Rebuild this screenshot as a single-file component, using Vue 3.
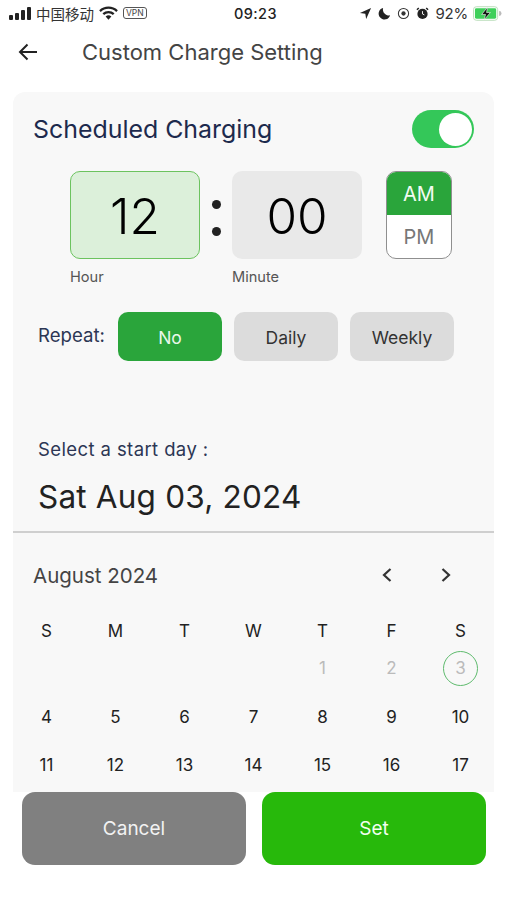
<script setup>
const weekdays = ['S', 'M', 'T', 'W', 'T', 'F', 'S']
const days = [
  { n: '', k: 'a' }, { n: '', k: 'b' }, { n: '', k: 'c' }, { n: '', k: 'd' },
  { n: 1, muted: true }, { n: 2, muted: true }, { n: 3, muted: true, selected: true },
  ...[4, 5, 6, 7, 8, 9, 10, 11, 12, 13, 14, 15, 16, 17].map(n => ({ n })),
]
</script>

<template>
  <div class="page">
    <div class="status">
      <div class="status-left">
        <svg class="signal" viewBox="0 0 22 14" width="22" height="14">
          <rect x="0" y="9" width="4" height="5" rx="1" />
          <rect x="6" y="7" width="4" height="7" rx="1" />
          <rect x="12" y="4" width="4" height="10" rx="1" />
          <rect x="18" y="1" width="4" height="13" rx="1" />
        </svg>
        <span class="carrier">中国移动</span>
        <svg class="wifi" viewBox="0 0 20 14" width="19" height="14">
          <path d="M1 5a13 13 0 0 1 18 0" fill="none" stroke="#222" stroke-width="2.4" />
          <path d="M4.5 8.2a8 8 0 0 1 11 0" fill="none" stroke="#222" stroke-width="2.4" />
          <path d="M10 14l-3-3.2a4.300 4.300 0 0 1 6 0z" fill="#222" />
        </svg>
        <span class="vpn">VPN</span>
      </div>
      <span class="time">09:23</span>
      <div class="status-right">
        <svg viewBox="0 0 14 14" width="13" height="13"><path d="M13 1L1 6.500l5.800.8.9 5.700z" fill="#222" /></svg>
        <svg viewBox="0 0 14 14" width="13" height="13"><path d="M5.500 1a6.300 6.300 0 1 0 7.500 8A6.500 6.500 0 0 1 5.500 1z" fill="#222" /></svg>
        <svg viewBox="0 0 14 14" width="13" height="13">
          <circle cx="7" cy="7" r="5.500" fill="none" stroke="#333" stroke-width="1.100" />
          <circle cx="7" cy="7" r="2.300" fill="#333" />
        </svg>
        <svg viewBox="0 0 14 14" width="13" height="13">
          <circle cx="7" cy="7.500" r="5.500" fill="#222" />
          <path d="M1 3l2-2M13 3l-2-2" stroke="#222" stroke-width="1.600" />
          <path d="M7 4.500v3l2 1" stroke="#fff" stroke-width="1" fill="none" />
        </svg>
        <span class="battery-text">92%</span>
        <svg viewBox="0 0 30 15" width="29" height="15">
          <rect x="0.500" y="0.500" width="25" height="14" rx="3" fill="#fff" stroke="#b9ddb9" />
          <rect x="2" y="2" width="22" height="11" rx="1.500" fill="#3ecf5a" />
          <path d="M15 1L9 8.500h4L11.500 14 18 6.500h-4z" fill="#111" stroke="#fff" stroke-width=".6" />
          <path d="M27 5v5a2.500 2.500 0 0 0 0-5z" fill="#bbb" />
        </svg>
      </div>
    </div>

    <header class="header">
      <svg class="back" viewBox="0 0 20 18" width="20" height="18">
        <path d="M19 9H2M9.500 1.500L2 9l7.500 7.500" fill="none" stroke="#222" stroke-width="2" />
      </svg>
      <h1 class="page-title">Custom Charge Setting</h1>
    </header>

    <main class="card">
      <div class="title-row">
        <h2 class="title">Scheduled Charging</h2>
        <div class="toggle"><span class="knob"></span></div>
      </div>

      <div class="time-row">
        <div class="time-col">
          <div class="time-box active">12</div>
          <span class="time-label">Hour</span>
        </div>
        <div class="colon"><i></i><i></i></div>
        <div class="time-col">
          <div class="time-box">00</div>
          <span class="time-label">Minute</span>
        </div>
        <div class="ampm">
          <span class="am">AM</span>
          <span class="pm">PM</span>
        </div>
      </div>

      <div class="repeat-row">
        <span class="repeat-label">Repeat:</span>
        <button class="pill on">No</button>
        <button class="pill">Daily</button>
        <button class="pill">Weekly</button>
      </div>

      <div class="start-label">Select a start day :</div>
      <div class="start-date">Sat Aug 03, 2024</div>
      <div class="divider"></div>

      <div class="month-row">
        <span class="month">August 2024</span>
        <div class="month-nav">
          <svg viewBox="0 0 12 16" width="12" height="16"><path d="M9.500 2L3 8l6.500 6" fill="none" stroke="#333" stroke-width="2.200" /></svg>
          <svg viewBox="0 0 12 16" width="12" height="16"><path d="M2.500 2L9 8l-6.500 6" fill="none" stroke="#333" stroke-width="2.200" /></svg>
        </div>
      </div>

      <div class="weekdays">
        <span v-for="(d, i) in weekdays" :key="i">{{ d }}</span>
      </div>
      <div class="days">
        <div v-for="d in days" :key="d.k || d.n" class="day">
          <span :class="{ muted: d.muted, selected: d.selected }">{{ d.n }}</span>
        </div>
      </div>
    </main>

    <footer class="actions">
      <button class="action cancel">Cancel</button>
      <button class="action set">Set</button>
    </footer>
  </div>
</template>

<style>
html, body { background: #fff; }
</style>

<style scoped>
.page {
  width: 507px;
  height: 900px;
  overflow: hidden;
  background: #fff;
  font-family: Inter, "Noto Sans CJK SC", sans-serif;
  color: #222;
}
.status {
  height: 28px;
  padding: 0 5px 2px 9px;
  box-sizing: border-box;
  display: grid;
  grid-template-columns: 1fr auto 1fr;
  align-items: center;
}
.status-left, .status-right { display: flex; align-items: center; }
.status-left { gap: 5px; }
.status-right { justify-content: flex-end; gap: 6px; }
.signal { fill: #222; }
.carrier { font-size: 14.500px; color: #333; }
.vpn {
  font-size: 8.500px;
  border: 1px solid #555;
  border-radius: 3px;
  padding: 0 2px;
  line-height: 10px;
  color: #444;
}
.time { font-size: 14.500px; font-weight: 500; letter-spacing: .4px; color: #222; }
.battery-text { font-size: 15px; color: #333; margin-right: -1px; letter-spacing: -.2px; }
.header {
  height: 50px;
  display: flex;
  align-items: center;
  padding-left: 18px;
  padding-bottom: 2px;
  box-sizing: border-box;
}
.page-title {
  margin: 0 0 0 44px;
  font-size: 22px;
  font-weight: 400;
  color: #444;
}
.card {
  margin: 14px 13px 0;
  height: 700px;
  box-sizing: border-box;
  overflow: hidden;
  background: #f8f8f8;
  border-radius: 12px 12px 0 0;
}
.title-row {
  height: 38px;
  margin-top: 18px;
  padding: 0 20px;
  display: flex;
  justify-content: space-between;
  align-items: center;
}
.title {
  margin: 0;
  font-size: 24.900px;
  font-weight: 400;
  color: #1d2a4d;
}
.toggle {
  width: 62px;
  height: 38px;
  box-sizing: border-box;
  padding: 2.500px;
  border-radius: 19px;
  background: #34c759;
  display: flex;
  justify-content: flex-end;
}
.knob { width: 33px; height: 33px; border-radius: 50%; background: #fff; }
.time-row {
  display: flex;
  margin-top: 23px;
  padding-left: 57px;
}
.time-col { display: flex; flex-direction: column; }
.time-box {
  width: 130px;
  height: 88px;
  box-sizing: border-box;
  padding-top: 2px;
  border-radius: 10px;
  background: #e9e9e9;
  display: flex;
  align-items: center;
  justify-content: center;
  font-size: 49.500px;
  font-weight: 300;
  color: #000;
}
.time-box.active {
  background: #dcf0da;
  border: 1.700px solid #6cc35f;
}
.time-label { margin-top: 8px; font-size: 14.600px; line-height: 20px; color: #555; }
.colon {
  width: 32px;
  height: 88px;
  display: flex;
  flex-direction: column;
  align-items: center;
  justify-content: center;
  gap: 18px;
  padding-top: 6px;
  box-sizing: border-box;
}
.colon i { width: 9px; height: 9px; border-radius: 50%; background: #222; }
.ampm {
  margin-left: 24px;
  width: 66px;
  height: 88px;
  box-sizing: border-box;
  border: 1.500px solid #8f8f8f;
  border-radius: 10px;
  overflow: hidden;
  display: flex;
  flex-direction: column;
  background: #fff;
  font-size: 20px;
}
.am, .pm { flex: 1; display: flex; align-items: center; justify-content: center; }
.am { background: #2aa53b; color: #f2fbf2; }
.pm { color: #777; }
.repeat-row {
  display: flex;
  align-items: center;
  margin-top: 25px;
  padding-left: 25px;
}
.repeat-label { width: 80px; font-size: 18.600px; color: #2c3654; padding-bottom: 3px; }
.pill {
  width: 104px;
  height: 49px;
  margin-right: 12px;
  border: 0;
  border-radius: 10px;
  background: #dcdcdc;
  font: 400 17.500px Inter, sans-serif;
  color: #333;
  padding: 2px 0 0;
}
.pill.on { background: #2aa53b; color: #e9f7e9; }
.start-label {
  margin-top: 75px;
  padding-left: 25px;
  font-size: 18.500px;
  line-height: 26px;
  letter-spacing: .4px;
  color: #2c3654;
}
.start-date {
  margin-top: 13px;
  padding-left: 25px;
  font-size: 31.500px;
  line-height: 44px;
  color: #222;
  letter-spacing: .2px;
}
.divider { height: 2px; background: #cfcfcf; margin-top: 12px; }
.month-row {
  height: 30px;
  margin-top: 27px;
  padding-left: 20px;
  display: flex;
  justify-content: space-between;
  align-items: center;
}
.month { font-size: 20.500px; color: #444; }
.month-nav { display: flex; gap: 47px; padding-right: 42px; }
.weekdays {
  margin: 31px 0 0 -1px;
  display: grid;
  grid-template-columns: repeat(7, 69px);
  text-align: center;
  font-size: 17px;
  line-height: 20px;
  color: #222;
}
.days {
  margin: 3px 0 0 -1px;
  display: grid;
  grid-template-columns: repeat(7, 69px);
  grid-auto-rows: 48.500px;
}
.day {
  display: flex;
  align-items: center;
  justify-content: center;
  font-size: 17px;
  color: #222;
}
.day .muted { color: #bbb; }
.day .selected {
  width: 35px;
  height: 35px;
  box-sizing: border-box;
  border: 1.700px solid #5fbb6e;
  border-radius: 50%;
  display: flex;
  align-items: center;
  justify-content: center;
}
.actions {
  display: flex;
  gap: 16px;
  padding: 0 21px 0 22px;
}
.action {
  flex: 1;
  height: 73px;
  border: 0;
  border-radius: 13px;
  font: 400 19px Inter, sans-serif;
  padding: 0;
}
.cancel { background: #808080; color: #f2f2f2; }
.set { background: #27b90b; color: #f2fff0; }
</style>
